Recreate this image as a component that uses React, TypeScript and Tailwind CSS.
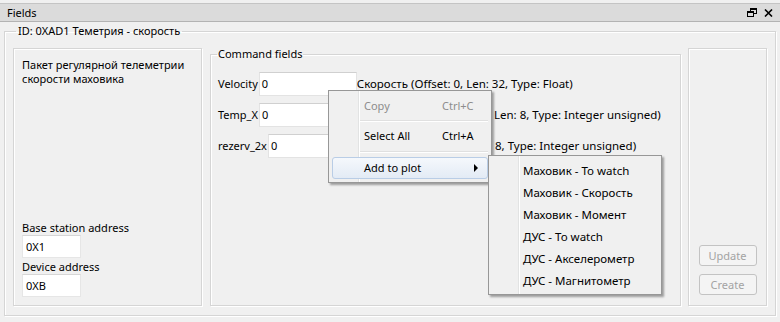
import React from 'react';

const etched = 'border border-[#d5d5d5] shadow-[inset_1px_1px_0_#ffffff,1px_1px_0_#ffffff]';

const FieldRow = ({label, value, desc}: {label: string; value: string; desc: string}) => (
	<div className="flex items-center h-[24px] whitespace-nowrap">
		<span>{label}</span>
		<div className="w-[98px] h-[24px] bg-white border border-[#e3e3e3] border-t-[#d0d0d0] flex items-center pl-[2px] ml-[1px]">
			{value}
		</div>
		<span className="text-[11.5px]">{desc}</span>
	</div>
);

const MenuItem = ({label, shortcut, disabled, active, arrow}: {label: string; shortcut?: string; disabled?: boolean; active?: boolean; arrow?: boolean}) => (
	<div
		className={`relative flex items-center h-[22px] mx-[3px] pl-[31px] rounded-[3px] border ${
			active
				? 'border-[#b9cde6] bg-gradient-to-b from-[#f5f8fc] to-[#e3ebf5]'
				: 'border-transparent'
		} ${disabled ? 'text-[#8d8d8d]' : 'text-black'}`}
	>
		<span className="w-[78px]">{label}</span>
		{shortcut && <span>{shortcut}</span>}
		{arrow && (
			<span className="absolute right-[9px] top-[6px] w-0 h-0 border-y-[4px] border-y-transparent border-l-[4px] border-l-black" />
		)}
	</div>
);

const Separator = () => (
	<div className="ml-[30px] mr-[3px] border-t border-[#e0e0e0] border-b border-b-white" />
);

const App = () => {
	const plots = [
		'Маховик - To watch',
		'Маховик - Скорость',
		'Маховик - Момент',
		'ДУС - To watch',
		'ДУС - Акселерометр',
		'ДУС - Магнитометр',
	];

	return (
		<div
			className="relative w-[780px] h-[322px] overflow-hidden bg-[#f0f0f0] text-[11px] leading-[16px] text-black"
			style={{fontFamily: '"Noto Sans", sans-serif'}}
		>
			{/* ---Title bar--- */}
			<div className="mt-[3px] h-[19px] bg-[#dbdbdb] border-t border-[#c4c4c4] border-b border-b-[#b3b3b3] flex items-center pl-[7px] pr-[7px]">
				<span>Fields</span>
				<div className="ml-auto flex items-center gap-[7px]">
					<svg width="10" height="9" viewBox="0 0 10 9">
						<rect x="3.5" y="0.5" width="6" height="5" fill="none" stroke="#000" />
						<rect x="3" y="0" width="7" height="2" fill="#000" />
						<rect x="0.5" y="3.5" width="6" height="5" fill="#dbdbdb" stroke="#000" />
						<rect x="0" y="3" width="7" height="2" fill="#000" />
					</svg>
					<svg width="9" height="8" viewBox="0 0 9 8">
						<path d="M1 0.5 L8 7.5 M8 0.5 L1 7.5" stroke="#000" strokeWidth="1.6" />
					</svg>
				</div>
			</div>

			{/* ---Outer group--- */}
			<fieldset className={`mt-[1px] ml-[4px] w-[772px] h-[293px] pl-[8px] ${etched}`}>
				<legend className="ml-[3px] px-[2px] leading-[16px]">ID: 0XAD1 Теметрия - скорость</legend>
				<div className="flex mt-[9px]">
					{/* left panel */}
					<div className={`w-[189px] h-[258px] flex flex-col pl-[8px] pt-[9px] pb-[8px] ${etched}`}>
						<div className="leading-[14px]">
							Пакет регулярной телеметрии
							<br />
							скорости маховика
						</div>
						<div className="mt-auto leading-[14px]">Base station address</div>
						<div className="w-[59px] h-[23px] bg-white border border-[#e6e6e6] border-t-[#d6d6d6] flex items-center pl-[3px]">
							0X1
						</div>
						<div className="mt-[2px] leading-[14px]">Device address</div>
						<div className="w-[59px] h-[23px] bg-white border border-[#e6e6e6] border-t-[#d6d6d6] flex items-center pl-[3px]">
							0XB
						</div>
					</div>

					{/* command fields */}
					<fieldset className={`ml-[8px] -mt-[2px] w-[471px] h-[260px] pl-[7px] ${etched}`}>
						<legend className="-ml-[1px] px-[1px] leading-[16px]">Command fields</legend>
						<div className="flex flex-col gap-[7px] mt-[10px]">
							<FieldRow label="Velocity" value="0" desc="Скорость (Offset: 0, Len: 32, Type: Float)" />
							<FieldRow
								label="Temp_X"
								value="0"
								desc="Температура (Offset: 32, Len: 8, Type: Integer unsigned)"
							/>
							<FieldRow label="rezerv_2x" value="0" desc="Резерв (Offset: 40, Len: 8, Type: Integer unsigned)" />
						</div>
					</fieldset>

					{/* buttons */}
					<div className={`ml-[7px] w-[79px] h-[258px] flex flex-col items-center justify-end gap-[8px] pb-[10px] ${etched}`}>
						<button className="w-[58px] h-[21px] rounded-[3px] border border-[#c3c3c3] bg-[#f4f4f4] text-[#a3a3a3]">
							Update
						</button>
						<button className="w-[58px] h-[21px] rounded-[3px] border border-[#c3c3c3] bg-[#f4f4f4] text-[#a3a3a3]">
							Create
						</button>
					</div>
				</div>
			</fieldset>

			{/* ---Context menu--- */}
			<div className="absolute left-[328px] top-[90px] w-[164px] pt-[4px] pb-[3px] bg-[#f0f0f0] border border-[#979797] shadow-[2px_2px_2px_rgba(0,0,0,0.35)]">
				<div className="absolute left-[29px] top-0 bottom-0 border-l border-[#e2e3e3] border-r border-r-white" />
				<MenuItem label="Copy" shortcut="Ctrl+C" disabled />
				<div className="py-[3px]">
					<Separator />
				</div>
				<MenuItem label="Select All" shortcut="Ctrl+A" />
				<div className="pt-[4px] pb-[4px]">
					<Separator />
				</div>
				<MenuItem label="Add to plot" active arrow />
			</div>

			{/* ---Submenu--- */}
			<div className="absolute left-[488px] top-[155px] w-[174px] pt-[4px] pb-[2px] bg-[#f0f0f0] border border-[#979797] shadow-[2px_2px_2px_rgba(0,0,0,0.35)] text-[11.5px]">
				<div className="absolute left-[29px] top-0 bottom-0 border-l border-[#e2e3e3] border-r border-r-white" />
				{plots.map((p) => (
					<div key={p} className="relative h-[22px] flex items-center pl-[34px]">
						{p}
					</div>
				))}
			</div>
		</div>
	);
};

export default App;
